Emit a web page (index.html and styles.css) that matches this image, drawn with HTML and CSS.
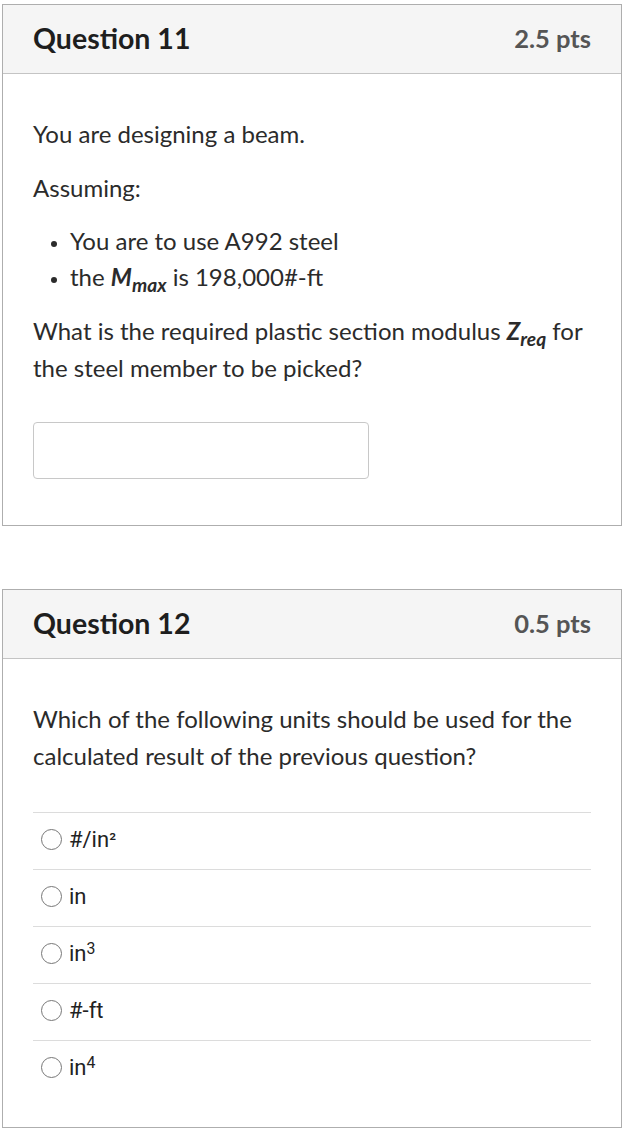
FILE: index.html
```html
<!DOCTYPE html>
<html>
<head>
<meta charset="utf-8">
<link rel="stylesheet" href="styles.css">
</head>
<body>
<div class="card">
  <div class="card-header">
    <span class="q-title">Question 11</span>
    <span class="q-pts">2.5 pts</span>
  </div>
  <div class="card-body">
    <p>You are designing a beam.</p>
    <p>Assuming:</p>
    <ul>
      <li>You are to use A992 steel</li>
      <li>the <b><i>M<sub>max</sub></i></b> is 198,000#-ft</li>
    </ul>
    <p>What is the required plastic section modulus <b><i>Z<sub>req</sub></i></b> for the steel member to be picked?</p>
    <div class="answer-input"></div>
  </div>
</div>

<div class="card card-second">
  <div class="card-header">
    <span class="q-title">Question 12</span>
    <span class="q-pts">0.5 pts</span>
  </div>
  <div class="card-body card-body-mc">
    <p>Which of the following units should be used for the calculated result of the previous question?</p>
    <div class="answers">
      <div class="answer"><span class="radio"></span><span class="ans-text">#/in<span class="sq">²</span></span></div>
      <div class="answer"><span class="radio"></span><span class="ans-text">in</span></div>
      <div class="answer"><span class="radio"></span><span class="ans-text">in<sup>3</sup></span></div>
      <div class="answer"><span class="radio"></span><span class="ans-text">#-ft</span></div>
      <div class="answer"><span class="radio"></span><span class="ans-text">in<sup>4</sup></span></div>
    </div>
  </div>
</div>
</body>
</html>
```

FILE: styles.css
```css
html, body {
  margin: 0;
  padding: 0;
  background: #fff;
}
body {
  font-family: Lato, "Liberation Sans", sans-serif;
  color: #2b2b2b;
  padding-top: 4px;
}
.card {
  margin-left: 2px;
  width: 618px;
  border: 1px solid #aeaeae;
}
.card-second {
  margin-top: 63px;
}
.card-header {
  height: 66px;
  padding: 0 30px 2px;
  background: #f5f5f5;
  border-bottom: 1px solid #c4c4c4;
  display: flex;
  align-items: center;
  justify-content: space-between;
}
.q-title {
  font-weight: 700;
  font-size: 28.5px;
  color: #1e1e1e;
}
.q-pts {
  font-weight: 700;
  font-size: 25.5px;
  color: #555;
}
.card-body {
  padding: 24px 30px 46px;
  font-size: 24px;
}
.card-body p {
  margin: 17px 0;
  line-height: 37px;
}
.card-body ul {
  margin: 17px 0;
  padding-left: 37px;
}
.card-body li {
  line-height: 36px;
}
.card-body li::marker {
  font-size: 0.8em;
}
sub {
  font-size: 0.8em;
  line-height: 0;
  vertical-align: -0.3em;
}
.answer-input {
  margin-top: 36px;
  width: 334px;
  height: 55px;
  border: 1px solid #c8c8c8;
  border-radius: 4px;
}
.card-body-mc {
  padding-bottom: 30px;
}
.answers {
  margin-top: 38px;
}
.answer {
  height: 52px;
  padding: 0 0 4px 8px;
  border-top: 1px solid #dcdcdc;
  display: flex;
  align-items: center;
  gap: 7px;
}
.radio {
  width: 19px;
  height: 19px;
  border: 1.5px solid #777;
  border-radius: 50%;
  flex: none;
}
.ans-text {
  font-family: Roboto, "Liberation Sans", sans-serif;
  font-size: 22px;
  color: #222;
}
.ans-text .sq {
  font-size: 0.85em;
  vertical-align: 0.05em;
}
.ans-text sup {
  font-size: 0.72em;
  line-height: 0;
  vertical-align: 0.45em;
}
```
